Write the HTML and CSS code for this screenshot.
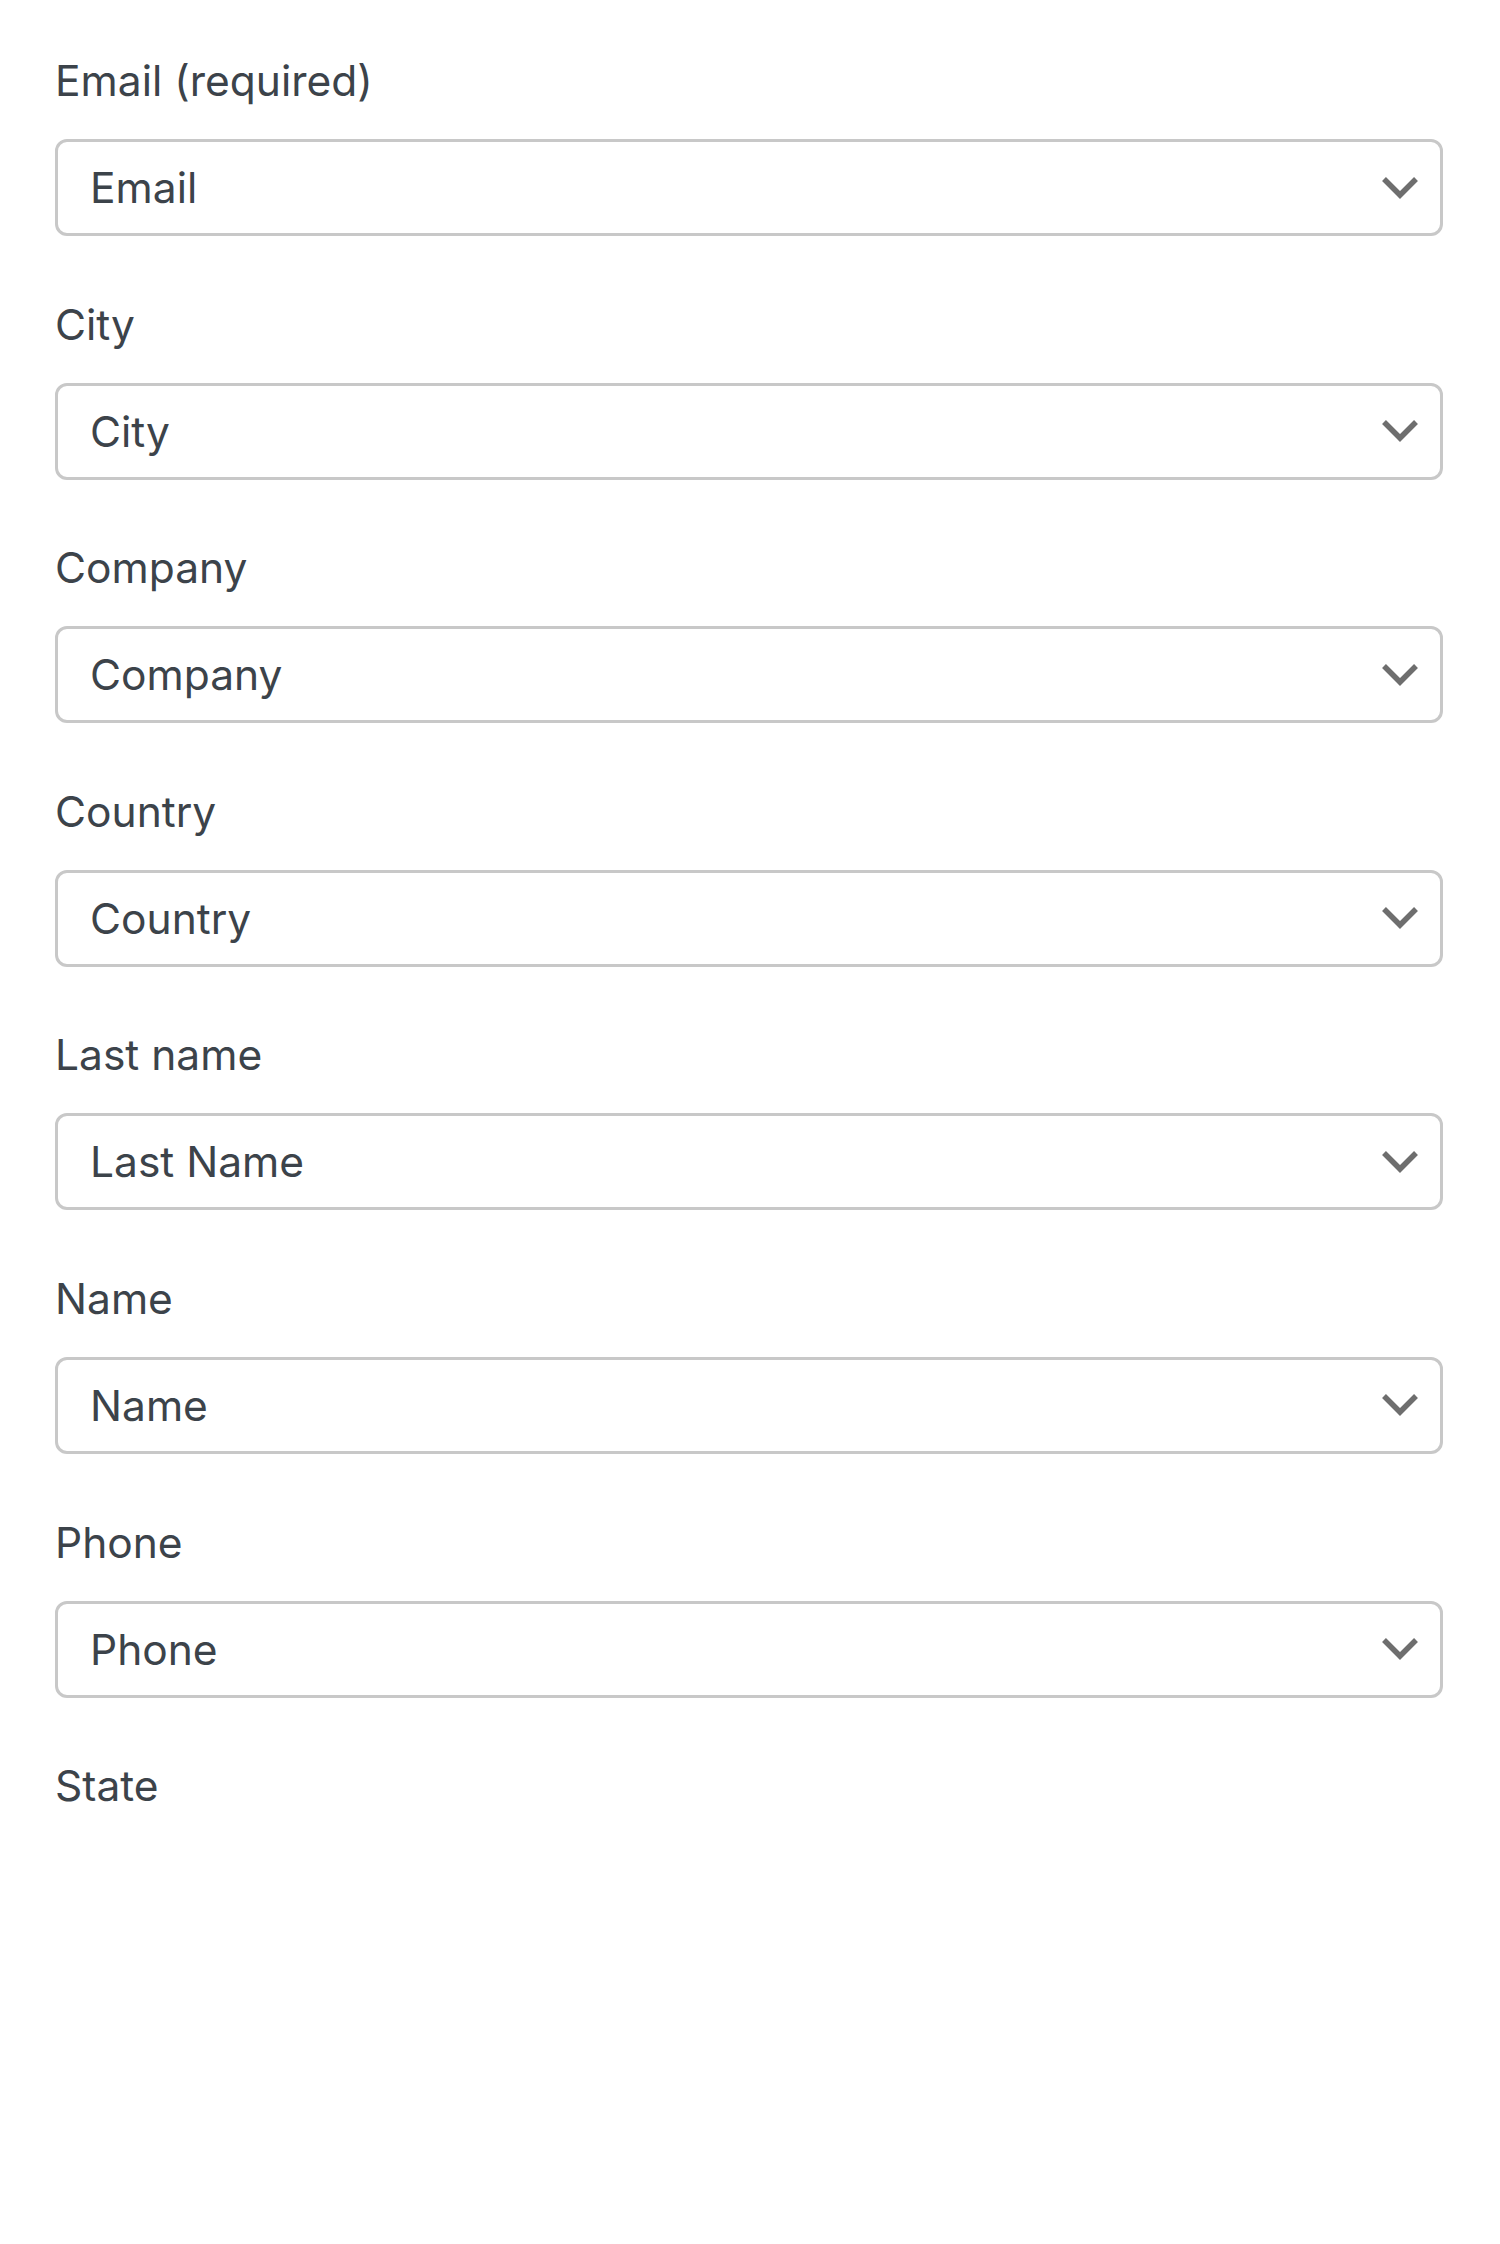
FILE: index.html
```html
<!DOCTYPE html>
<html lang="en">

<head>
    <meta charset="UTF-8">
    <meta name="viewport" content="width=device-width, initial-scale=1.0">
    <title>Field mapping</title>
    <link rel="stylesheet" href="styles.css">
</head>

<body>
    <div class="fields">
        <div class="field">
            <label class="label">Email (required)</label>
            <div class="select">
                <span>Email</span>
                <svg class="arrow" width="36" height="22" viewBox="0 0 36 22"><polyline points="2,2 18,18 34,2" /></svg>
            </div>
        </div>
        <div class="field">
            <label class="label">City</label>
            <div class="select">
                <span>City</span>
                <svg class="arrow" width="36" height="22" viewBox="0 0 36 22"><polyline points="2,2 18,18 34,2" /></svg>
            </div>
        </div>
        <div class="field">
            <label class="label">Company</label>
            <div class="select">
                <span>Company</span>
                <svg class="arrow" width="36" height="22" viewBox="0 0 36 22"><polyline points="2,2 18,18 34,2" /></svg>
            </div>
        </div>
        <div class="field">
            <label class="label">Country</label>
            <div class="select">
                <span>Country</span>
                <svg class="arrow" width="36" height="22" viewBox="0 0 36 22"><polyline points="2,2 18,18 34,2" /></svg>
            </div>
        </div>
        <div class="field">
            <label class="label">Last name</label>
            <div class="select">
                <span>Last Name</span>
                <svg class="arrow" width="36" height="22" viewBox="0 0 36 22"><polyline points="2,2 18,18 34,2" /></svg>
            </div>
        </div>
        <div class="field">
            <label class="label">Name</label>
            <div class="select">
                <span>Name</span>
                <svg class="arrow" width="36" height="22" viewBox="0 0 36 22"><polyline points="2,2 18,18 34,2" /></svg>
            </div>
        </div>
        <div class="field">
            <label class="label">Phone</label>
            <div class="select">
                <span>Phone</span>
                <svg class="arrow" width="36" height="22" viewBox="0 0 36 22"><polyline points="2,2 18,18 34,2" /></svg>
            </div>
        </div>
        <div class="field">
            <label class="label">State</label>
        </div>
    </div>
</body>

</html>
```

FILE: styles.css
```css
* {
    margin: 0;
    padding: 0;
    box-sizing: border-box;
}

body {
    background: #fff;
    font-family: Inter, "Liberation Sans", sans-serif;
    color: #3c434a;
}

.fields {
    width: 1443px;
    padding: 51px 0 0 55px;
}

.field {
    margin-bottom: 58.6px;
}

.label {
    display: block;
    font-size: 42.5px;
    line-height: 60px;
    margin-bottom: 28px;
}

.select {
    display: flex;
    align-items: center;
    justify-content: space-between;
    height: 97px;
    padding: 0 22px 0 32px;
    border: 3px solid #c8c8c8;
    border-radius: 12px;
    font-size: 42.5px;
    background: #fff;
}

.arrow polyline {
    fill: none;
    stroke: #6e6e6e;
    stroke-width: 5.5;
}
```
